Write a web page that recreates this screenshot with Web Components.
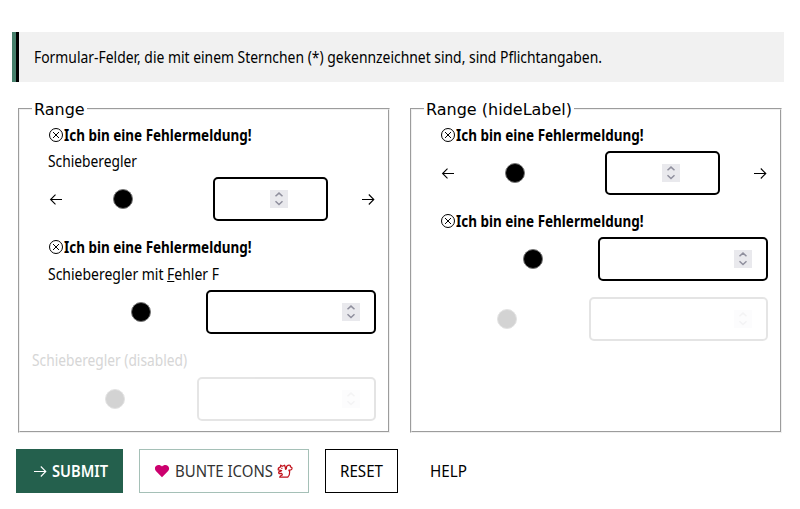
<!DOCTYPE html>
<html lang="de"><head><meta charset="utf-8"><title>Formular</title>
<style>html,body{margin:0;background:#fff;color:#000}body{width:800px;height:509px;overflow:hidden;font:15.5px/22px "Noto Sans",sans-serif}</style></head>
<body><form-page></form-page>
<script>
const define=(name,html,setup)=>customElements.define(name,class extends HTMLElement{
  constructor(){super();this.attachShadow({mode:'open'}).innerHTML=typeof html==='function'?html(this):html;}
  connectedCallback(){if(setup)setup(this,this.shadowRoot);}
});
// Text squeezed horizontally to a given advance width.
define('fit-text','<style>:host{display:block;white-space:nowrap;flex:none;height:22px;line-height:22px}span{display:inline-block;transform-origin:0 50%}</style><span><slot></slot></span>',(h,r)=>{
  const w=+h.getAttribute('w'),s=r.querySelector('span');h.style.width=w+'px';
  s.style.transform='scaleX('+w/s.getBoundingClientRect().width+')';
});
const icons={
  left:'<svg width="16" height="16" viewBox="0 0 16 16" fill="none" stroke="currentColor" stroke-width="1.1"><path d="M14 8.500H2.600M7.500 3.700 2.600 8.500 7.500 13.300"/></svg>',
  right:'<svg width="16" height="16" viewBox="0 0 16 16" fill="none" stroke="currentColor" stroke-width="1.1"><path d="M2 8.500H13.500M8.800 3.500l5 5-5 5"/></svg>',
  error:'<svg width="16" height="16" viewBox="0 0 16 16" fill="none" stroke="currentColor"><circle cx="8" cy="8" r="6.500"/><path d="m5 5 6 6m0-6-6 6"/></svg>',
  heart:'<svg width="16" height="16" viewBox="0 0 16 16" fill="#cc006e"><path d="M7 14.200 1.100 8.300C-.5 6.700-.5 4.200 1 2.900 2.700 1.500 5.400 1.700 7 3.500 8.600 1.700 11.300 1.500 13 2.900 14.500 4.200 14.500 6.700 12.900 8.300Z"/></svg>',
  squirrel:'<svg width="16" height="16" viewBox="0 0 16 16" fill="none" stroke="#c1121c" stroke-width="1.25" stroke-linejoin="round"><path d="M3.700 2.200 5.300 3.300 7.600 2.200 8.300 4.300 8.500 6.300 9.300 5.900 9.700 3.200Q11.800 1.500 13.300 2.500L13.400 3.800Q15.600 4.200 14.800 6.100 13.800 7.400 11.900 7.200 13.200 8.600 12.500 10.200 12.900 12.400 10.700 14.200H2.700Q2.900 12.600 5.400 12L4.600 10.400 2 10.600 1.600 9.100 4.600 7.600 1.200 6.900 1.400 5.100 3.500 3.900ZM4.300 5.300H5.400"/></svg>'
};
define('ui-icon',h=>'<style>:host{display:block;width:16px;height:16px;flex:none}svg{display:block}</style>'+icons[h.getAttribute('name')]);
define('note-bar','<style>:host{display:flex;align-items:center;box-sizing:border-box;height:50px;margin:32px 16px 0 12px;background:#f1f1f1;border-left:4px solid #467f6b}.bar{width:3px;height:50px;background:#000;margin-right:15px}</style><div class="bar"></div><slot></slot>');
define('field-group',h=>`<style>:host{display:block;width:372px}fieldset{box-sizing:border-box;height:333px;margin:0;padding:6px 12px 0 12px;border:2px groove #f0f0f0;min-width:0}legend{font:16px/20px "DejaVu Sans",sans-serif;height:18px;padding:0 2px;white-space:nowrap}</style><fieldset><legend>${h.getAttribute('legend')}</legend><slot></slot></fieldset>`);
define('error-text','<style>:host{display:flex;align-items:center;height:22px;margin-left:16px;font-weight:700}</style><ui-icon name="error"></ui-icon><fit-text w="187.5">Ich bin eine Fehlermeldung!</fit-text>');
define('number-box','<style>:host{display:flex;align-items:center;justify-content:flex-end;box-sizing:border-box;width:var(--w);height:44px;border:2px solid #000;border-radius:5px;padding-right:var(--pad,14px);flex:none}svg{display:block;background:#e9e9ed}</style><svg width="18" height="18" viewBox="0 0 18 18" fill="none" stroke="#8f8f9d" stroke-width="1.5"><path d="m5.500 6.300 3.500-3.200 3.500 3.200M5.500 11.300 9 14.500l3.500-3.200"/></svg>');
define('range-row',h=>{const a=h.hasAttribute('arrows');return `<style>:host{display:flex;align-items:center;height:44px;margin-left:${h.hasAttribute('disabled')?0:16}px}i{width:18px;height:18px;border:1px solid #777;border-radius:50%;background:#000;flex:none}.track{flex:1;display:flex;padding-left:${h.getAttribute('thumb')}px}number-box{--w:${h.getAttribute('box')}px;${a?'--pad:38px;margin-right:32px':''}}:host([disabled]) .track i{background:#d3d3d3;border-color:#e3e3e3}:host([disabled]) number-box{opacity:.1}</style>${a?'<ui-icon name="left"></ui-icon>':''}<div class="track"><i></i></div><number-box></number-box>${a?'<ui-icon name="right"></ui-icon>':''}`});
define('form-button','<style>:host{display:flex;align-items:center;justify-content:center;gap:4px;box-sizing:border-box;height:44px;border:1px solid transparent}:host([kind=submit]){width:107px;background:#24604d;color:#fff;font-weight:600}:host([kind=color]){width:170px;border-color:#a5c0b7;color:#333}:host([kind=reset]){width:73px;border-color:#000}:host([kind=help]){width:69px}</style><slot></slot>');
define('form-page',`<style>:host{display:block}.groups{display:flex;gap:20px;margin:18px 0 0 18px}.label{margin:4px 0 5px 16px}.two{margin:5px 0 5px 16px}.off{margin:15px 0 6px;color:#d6d6d6}.next{margin-top:15px}.last{margin-top:16px}.tight{margin-top:5px}.buttons{display:flex;gap:16px;margin:16px 0 0 16px}</style>
<note-bar><fit-text w="568">Formular-Felder, die mit einem Sternchen (*) gekennzeichnet sind, sind Pflichtangaben.</fit-text></note-bar>
<div class="groups"><field-group legend="Range">
<error-text></error-text><fit-text class="label" w="89">Schieberegler</fit-text><range-row arrows thumb="49" box="115"></range-row>
<error-text class="next"></error-text><fit-text class="two" w="171">Schieberegler mit <u>F</u>ehler F</fit-text><range-row thumb="83" box="170"></range-row>
<fit-text class="off" w="155">Schieberegler (disabled)</fit-text><range-row disabled thumb="73" box="179"></range-row>
</field-group><field-group legend="Range (hideLabel)">
<error-text></error-text><range-row class="tight" arrows thumb="49" box="115"></range-row>
<error-text class="next"></error-text><range-row class="tight" thumb="83" box="170"></range-row>
<range-row class="last" disabled thumb="73" box="179"></range-row>
</field-group></div>
<div class="buttons"><form-button kind="submit"><ui-icon name="right"></ui-icon><fit-text w="56">SUBMIT</fit-text></form-button>
<form-button kind="color"><ui-icon name="heart"></ui-icon><fit-text w="98">BUNTE ICONS</fit-text><ui-icon name="squirrel"></ui-icon></form-button>
<form-button kind="reset"><fit-text w="43">RESET</fit-text></form-button><form-button kind="help"><fit-text w="37">HELP</fit-text></form-button></div>`);
</script></body></html>
